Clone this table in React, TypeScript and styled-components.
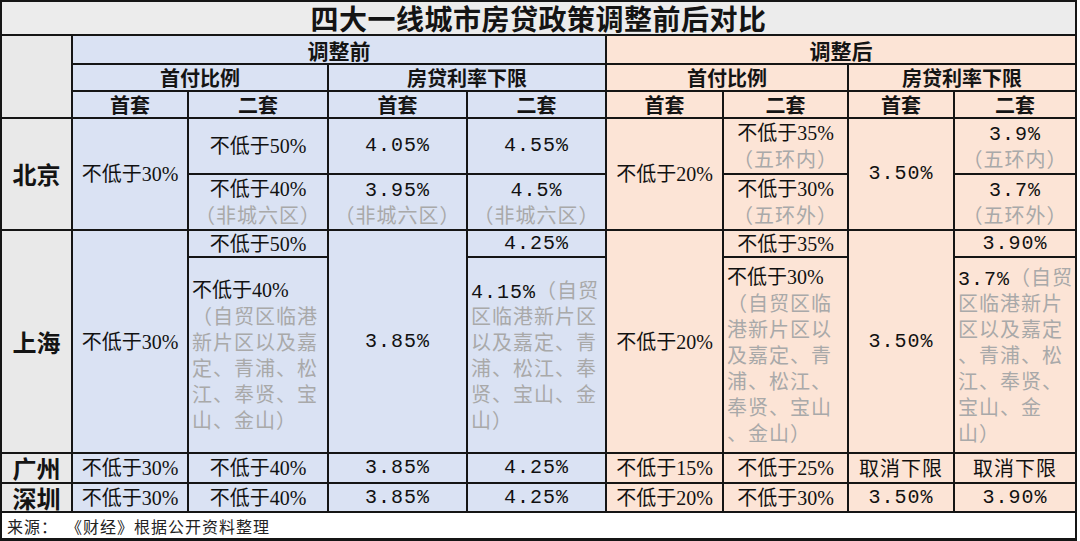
import React from "react";
import styled, { createGlobalStyle } from "styled-components";

const Global = createGlobalStyle`
  html, body { margin: 0; padding: 0; background: #ffffff; }
  body { width: 1080px; height: 541px; overflow: hidden; }
`;

type Tone = "title" | "grey" | "blue" | "peach" | "white";

const toneBg: Record<Tone, string> = {
  title: "#ececec",
  grey: "#e9e9e9",
  blue: "#dae2f3",
  peach: "#fce4d6",
  white: "#ffffff",
};

const Sheet = styled.div`
  display: grid;
  width: 1077px;
  box-sizing: border-box;
  grid-template-columns: 69px 114px 138px 137px 137px 115px 123px 104px 120px;
  grid-template-rows: 32px 27px 25px 25px 54px 54px 25px 194px 28px 27px 25px;
  gap: 2px;
  background: #151515;
  border: 2px solid #151515;
  border-bottom-width: 3px;
  font-family: "Liberation Serif", "Noto Sans CJK SC", sans-serif;
  color: #111111;
`;

const Cell = styled.div<{
  $c: number;
  $r: number;
  $cs?: number;
  $rs?: number;
  $tone: Tone;
  $left?: boolean;
}>`
  grid-column: ${(p) => p.$c} / span ${(p) => p.$cs ?? 1};
  grid-row: ${(p) => p.$r} / span ${(p) => p.$rs ?? 1};
  background: ${(p) => toneBg[p.$tone]};
  display: flex;
  flex-direction: column;
  justify-content: center;
  align-items: ${(p) => (p.$left ? "flex-start" : "center")};
  text-align: ${(p) => (p.$left ? "left" : "center")};
  padding-left: ${(p) => (p.$left ? "3px" : "0")};
  font-size: 20px;
  line-height: 22px;
  white-space: nowrap;
  min-width: 0;
  min-height: 0;
`;

const TitleText = styled.div`
  font-family: "Noto Sans CJK SC", sans-serif;
  font-weight: 700;
  font-size: 28px;
  line-height: 28px;
  color: #141414;
  letter-spacing: 0.5px;
`;

const Head = styled.div<{ $size?: number }>`
  font-family: "Noto Sans CJK SC", sans-serif;
  font-weight: 700;
  font-size: ${(p) => p.$size ?? 20}px;
  line-height: 20px;
  color: #141414;
`;

const City = styled.div`
  font-family: "Noto Sans CJK SC", sans-serif;
  font-weight: 700;
  font-size: 24px;
  line-height: 24px;
  color: #141414;
`;

const Rate = styled.span`
  font-family: "Liberation Mono", "Noto Sans CJK SC", monospace;
  letter-spacing: 1px;
`;

const Plain = styled.span`
  font-family: "Noto Sans CJK SC", sans-serif;
  letter-spacing: 1px;
`;

const Note = styled.span`
  font-family: "Noto Sans CJK SC", sans-serif;
  color: #a9a9a9;
  letter-spacing: 1px;
`;

const Line = styled.div`
  display: block;
  height: 26px;
  line-height: 26px;
`;

const Source = styled.div`
  display: flex;
  align-items: center;
  gap: 8px;
  font-family: "Noto Sans CJK SC", sans-serif;
  font-size: 16px;
  line-height: 20px;
  padding-left: 2px;
  letter-spacing: 1px;
  color: #222222;
`;

type Seg = { t: string; k: "rate" | "pct" | "note" };
const LongText: React.FC<{ lines: Seg[][] }> = ({ lines }) => (
  <>
    {lines.map((segs, i) => (
      <Line key={i}>
        {segs.map((s, j) =>
          s.k === "rate" ? (
            <Rate key={j}>{s.t}</Rate>
          ) : s.k === "note" ? (
            <Note key={j}>{s.t}</Note>
          ) : (
            <span key={j}>{s.t}</span>
          )
        )}
      </Line>
    ))}
  </>
);

const n = (t: string): Seg => ({ t, k: "note" });

export default function App() {
  return (
    <>
      <Global />
      <Sheet>
        <Cell $c={1} $r={1} $cs={9} $tone="title">
          <TitleText>四大一线城市房贷政策调整前后对比</TitleText>
        </Cell>

        <Cell $c={1} $r={2} $rs={3} $tone="grey" />
        <Cell $c={2} $r={2} $cs={4} $tone="blue">
          <Head $size={21}>调整前</Head>
        </Cell>
        <Cell $c={6} $r={2} $cs={4} $tone="peach">
          <Head $size={21}>调整后</Head>
        </Cell>

        <Cell $c={2} $r={3} $cs={2} $tone="blue"><Head>首付比例</Head></Cell>
        <Cell $c={4} $r={3} $cs={2} $tone="blue"><Head>房贷利率下限</Head></Cell>
        <Cell $c={6} $r={3} $cs={2} $tone="peach"><Head>首付比例</Head></Cell>
        <Cell $c={8} $r={3} $cs={2} $tone="peach"><Head>房贷利率下限</Head></Cell>

        {["首套", "二套", "首套", "二套", "首套", "二套", "首套", "二套"].map((t, i) => (
          <Cell key={i} $c={i + 2} $r={4} $tone={i < 4 ? "blue" : "peach"}>
            <Head>{t}</Head>
          </Cell>
        ))}

        {/* 北京 */}
        <Cell $c={1} $r={5} $rs={2} $tone="grey"><City>北京</City></Cell>
        <Cell $c={2} $r={5} $rs={2} $tone="blue">不低于30%</Cell>
        <Cell $c={3} $r={5} $tone="blue">不低于50%</Cell>
        <Cell $c={3} $r={6} $tone="blue">
          <Line>不低于40%</Line>
          <Line><Note>（非城六区）</Note></Line>
        </Cell>
        <Cell $c={4} $r={5} $tone="blue"><Rate>4.05%</Rate></Cell>
        <Cell $c={4} $r={6} $tone="blue">
          <Line><Rate>3.95%</Rate></Line>
          <Line><Note>（非城六区）</Note></Line>
        </Cell>
        <Cell $c={5} $r={5} $tone="blue"><Rate>4.55%</Rate></Cell>
        <Cell $c={5} $r={6} $tone="blue">
          <Line><Rate>4.5%</Rate></Line>
          <Line><Note>（非城六区）</Note></Line>
        </Cell>
        <Cell $c={6} $r={5} $rs={2} $tone="peach">不低于20%</Cell>
        <Cell $c={7} $r={5} $tone="peach">
          <Line>不低于35%</Line>
          <Line><Note>（五环内）</Note></Line>
        </Cell>
        <Cell $c={7} $r={6} $tone="peach">
          <Line>不低于30%</Line>
          <Line><Note>（五环外）</Note></Line>
        </Cell>
        <Cell $c={8} $r={5} $rs={2} $tone="peach"><Rate>3.50%</Rate></Cell>
        <Cell $c={9} $r={5} $tone="peach">
          <Line><Rate>3.9%</Rate></Line>
          <Line><Note>（五环内）</Note></Line>
        </Cell>
        <Cell $c={9} $r={6} $tone="peach">
          <Line><Rate>3.7%</Rate></Line>
          <Line><Note>（五环外）</Note></Line>
        </Cell>

        {/* 上海 */}
        <Cell $c={1} $r={7} $rs={2} $tone="grey"><City>上海</City></Cell>
        <Cell $c={2} $r={7} $rs={2} $tone="blue">不低于30%</Cell>
        <Cell $c={3} $r={7} $tone="blue">不低于50%</Cell>
        <Cell $c={3} $r={8} $tone="blue" $left>
          <LongText
            lines={[
              [{ t: "不低于40%", k: "pct" }],
              [n("（自贸区临港")],
              [n("新片区以及嘉")],
              [n("定、青浦、松")],
              [n("江、奉贤、宝")],
              [n("山、金山）")],
            ]}
          />
        </Cell>
        <Cell $c={4} $r={7} $rs={2} $tone="blue"><Rate>3.85%</Rate></Cell>
        <Cell $c={5} $r={7} $tone="blue"><Rate>4.25%</Rate></Cell>
        <Cell $c={5} $r={8} $tone="blue" $left>
          <LongText
            lines={[
              [{ t: "4.15%", k: "rate" }, n("（自贸")],
              [n("区临港新片区")],
              [n("以及嘉定、青")],
              [n("浦、松江、奉")],
              [n("贤、宝山、金")],
              [n("山）")],
            ]}
          />
        </Cell>
        <Cell $c={6} $r={7} $rs={2} $tone="peach">不低于20%</Cell>
        <Cell $c={7} $r={7} $tone="peach">不低于35%</Cell>
        <Cell $c={7} $r={8} $tone="peach" $left>
          <LongText
            lines={[
              [{ t: "不低于30%", k: "pct" }],
              [n("（自贸区临")],
              [n("港新片区以")],
              [n("及嘉定、青")],
              [n("浦、松江、")],
              [n("奉贤、宝山")],
              [n("、金山）")],
            ]}
          />
        </Cell>
        <Cell $c={8} $r={7} $rs={2} $tone="peach"><Rate>3.50%</Rate></Cell>
        <Cell $c={9} $r={7} $tone="peach"><Rate>3.90%</Rate></Cell>
        <Cell $c={9} $r={8} $tone="peach" $left>
          <LongText
            lines={[
              [{ t: "3.7%", k: "rate" }, n("（自贸")],
              [n("区临港新片")],
              [n("区以及嘉定")],
              [n("、青浦、松")],
              [n("江、奉贤、")],
              [n("宝山、金")],
              [n("山）")],
            ]}
          />
        </Cell>

        {/* 广州 */}
        <Cell $c={1} $r={9} $tone="grey"><City>广州</City></Cell>
        <Cell $c={2} $r={9} $tone="blue">不低于30%</Cell>
        <Cell $c={3} $r={9} $tone="blue">不低于40%</Cell>
        <Cell $c={4} $r={9} $tone="blue"><Rate>3.85%</Rate></Cell>
        <Cell $c={5} $r={9} $tone="blue"><Rate>4.25%</Rate></Cell>
        <Cell $c={6} $r={9} $tone="peach">不低于15%</Cell>
        <Cell $c={7} $r={9} $tone="peach">不低于25%</Cell>
        <Cell $c={8} $r={9} $tone="peach"><Plain>取消下限</Plain></Cell>
        <Cell $c={9} $r={9} $tone="peach"><Plain>取消下限</Plain></Cell>

        {/* 深圳 */}
        <Cell $c={1} $r={10} $tone="grey"><City>深圳</City></Cell>
        <Cell $c={2} $r={10} $tone="blue">不低于30%</Cell>
        <Cell $c={3} $r={10} $tone="blue">不低于40%</Cell>
        <Cell $c={4} $r={10} $tone="blue"><Rate>3.85%</Rate></Cell>
        <Cell $c={5} $r={10} $tone="blue"><Rate>4.25%</Rate></Cell>
        <Cell $c={6} $r={10} $tone="peach">不低于20%</Cell>
        <Cell $c={7} $r={10} $tone="peach">不低于30%</Cell>
        <Cell $c={8} $r={10} $tone="peach"><Rate>3.50%</Rate></Cell>
        <Cell $c={9} $r={10} $tone="peach"><Rate>3.90%</Rate></Cell>

        <Cell $c={1} $r={11} $cs={9} $tone="white" $left>
          <Source>
            <span>来源：</span>
            <span>《财经》根据公开资料整理</span>
          </Source>
        </Cell>
      </Sheet>
    </>
  );
}
